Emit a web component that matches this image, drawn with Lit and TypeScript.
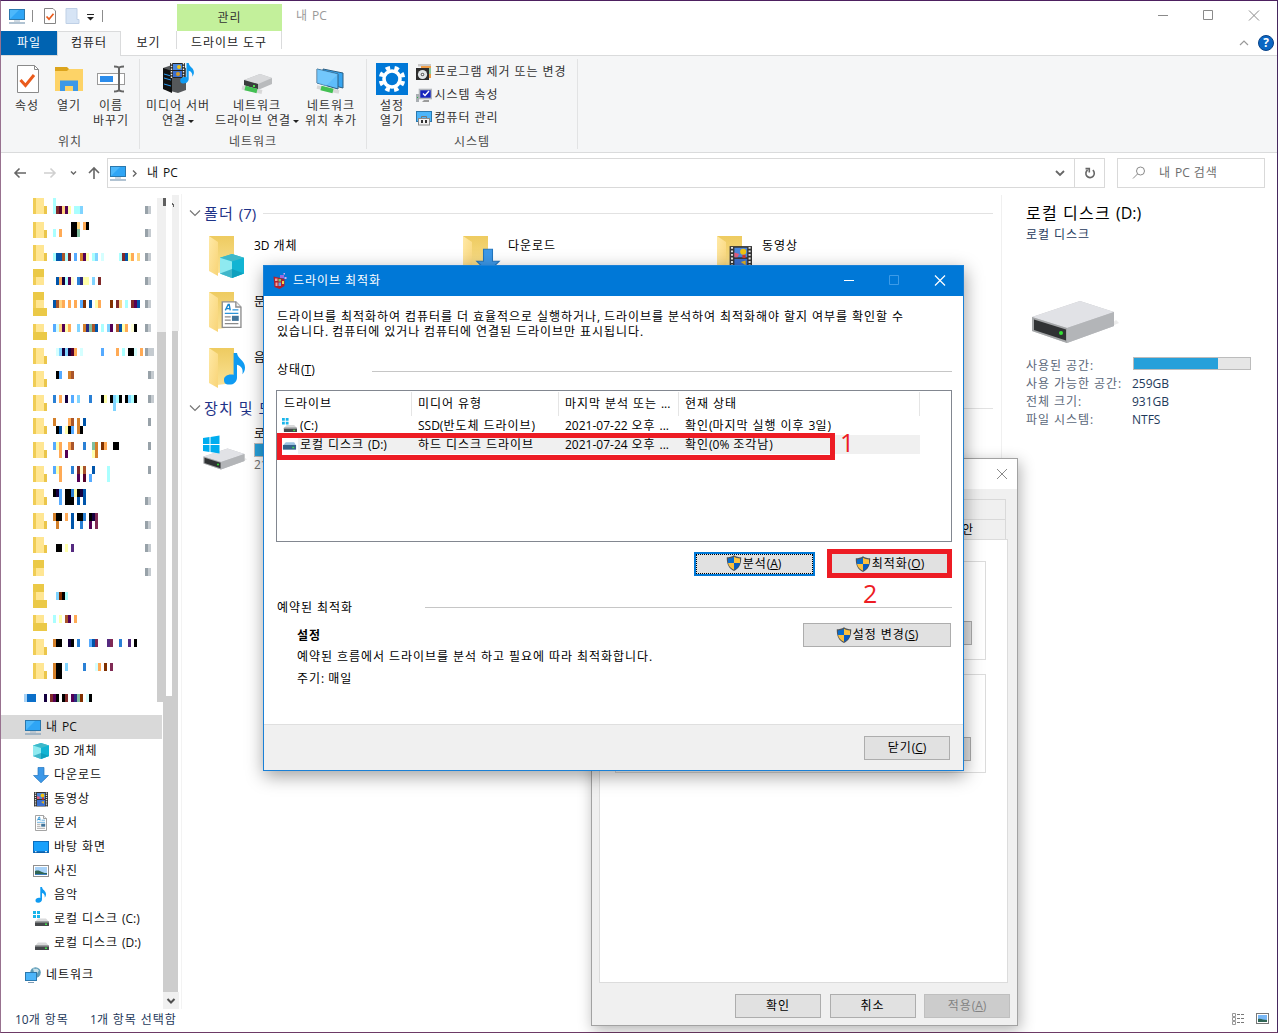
import { LitElement, html, svg, css } from 'lit';
import { customElement, property } from 'lit/decorators.js';
import { classMap } from 'lit/directives/class-map.js';

// wraps the hangul runs, they are set wider than the latin ones
const t = (text: string) =>
  text.split(/([가-힣]+)/).map((part, i) => (i % 2 ? html`<span class="ko">${part}</span>` : part));

const base = css`
  * {
    box-sizing: border-box;
  }
  .ko {
    letter-spacing: 0.08em;
  }
  svg {
    display: block;
    flex: none;
  }
  u {
    text-decoration-thickness: 1px;
    text-underline-offset: 1px;
  }
`;

const drive = (led = true) => svg`
  <path d="M1 9 L4 5.500 H12 L15 9Z" fill="#d9dadb"/>
  <rect x="1" y="8.500" width="14" height="4.500" rx=".6" fill="#45484b"/>
  <path d="M1 9h14" stroke="#a9abad"/>
  ${led ? svg`<rect x="11" y="10.500" width="2" height="1.500" fill="#3ee04a"/>` : ''}`;

const flag = svg`<path d="M0 0h3v3H0zM4 0h3v3H4zM0 4h3v3H0zM4 4h3v3H4z" fill="#19b5ea"/>`;

const monitor = svg`
  <rect x=".5" y="1.500" width="15" height="10" fill="#4db8fb" stroke="#2b78ad"/>
  <path d="M1 11 L10 2h5v9z" fill="#2fa5f5"/>
  <path d="M5 13h6" stroke="#9fb4c6"/><path d="M0 15h16" stroke="#7d9bb5" stroke-width="1.200"/>`;

const film = svg`
  <rect x="1" y="1" width="14" height="14.500" fill="#333"/>
  <rect x="4" y="2" width="8" height="6" fill="#4a86dc"/><rect x="4" y="9" width="8" height="6" fill="#3a6fd0"/>
  <path d="M2.500 1.500v14M13.500 1.500v14" stroke="#e5e5e5" stroke-width="1.300" stroke-dasharray="1.200 1"/>
  <circle cx="9.500" cy="4.500" r="1.900" fill="#f0c413"/><path d="M9 6.500h2v2H9z" fill="#d4372b"/>
  <path d="M4 5l3 1-1 2H4z" fill="#e05b7c"/><path d="M8 11l3-1v3z" fill="#e3b21f"/>`;

const docPage = svg`
  <path d="M2.500 .5h8l3 3v12h-11z" fill="#fff" stroke="#8d8d8d" stroke-width=".8"/>
  <path d="M10.500 .5v3h3" fill="#eee" stroke="#8d8d8d" stroke-width=".8"/>
  <path d="M4.300 5.500l1.700-3.500h.6l.6 3.500M5 4.500h2" stroke="#1787cf" fill="none" stroke-width=".8"/>
  <path d="M8.500 5.200h3.500M4 7.300h8" stroke="#2b93d8" stroke-width=".7"/>
  <path d="M4 9.300h3.500M4 11.300h3.500M4 13.300h8" stroke="#8a8a8a" stroke-width=".7"/>
  <rect x="8.200" y="8.700" width="4" height="3" fill="#42759b"/>`;

const note = svg`<path d="M7.300 0h1.700c.3 3 4 3.600 4 7.200 0 1.600-.6 2.600-1.300 3.400.5-2.400-.5-4.200-2.700-4.700v6.300c0 2-1.500 3.600-3.800 3.600S2.500 14.800 2.500 13.300s1.600-2.600 3.400-2.600c.5 0 1 .1 1.400.2z" fill="#0f9bf2"/>`;

const photo = svg`
  <rect x=".5" y="2.500" width="15" height="11" fill="#fff" stroke="#8f8f8f"/>
  <rect x="2" y="4" width="12" height="8" fill="#a8d2f8"/>
  <path d="M2 8c3-1 5 0 7 1s3 1 5 1v2H2z" fill="#2f6554"/><path d="M2 11h12v1H2z" fill="#3d7fc0"/>`;

const cube = svg`
  <path d="M8 0l8 2.500v10.500L8 16 0 13V2.500z" fill="#22c3d6"/>
  <path d="M8 0l8 2.500L8 5 0 2.500z" fill="#3fb8c9"/>
  <path d="M0 2.500L8 5v11L0 13z" fill="#8feaf0"/><path d="M8 5l8-2.500V13l-8 3z" fill="#12b4d3"/>
  <path d="M0 13l8-3 8 3-8 3z" fill="#0b93b0" opacity=".6"/>`;

const arrowDown = svg`<path d="M5 .5h6v8h4.500L8 15.800.5 8.500H5z" fill="#3c98e8" stroke="#2276bf" stroke-width=".7"/>`;

const icons: Record<string, unknown> = {
  pc: monitor,
  cube,
  down: arrowDown,
  film,
  doc: docPage,
  desktop: svg`<rect x=".5" y="2.500" width="15" height="11" fill="#18a0fb" stroke="#0b6dbd"/><path d="M1 13h14" stroke="#0b5ca6" stroke-width="1.300"/><path d="M2 12.700h1.500M12 12.700h2" stroke="#fff"/>`,
  photo,
  note,
  driveC: svg`${flag}<g transform="translate(1 2)">${drive()}</g>`,
  driveD: svg`<g transform="translate(1 2)">${drive()}</g>`,
  driveSel: svg`<path d="M1 9 L4 5.500 H13 L15 9Z" fill="#9ec3e2"/><rect x="1" y="8.500" width="14" height="5" fill="#34628a"/><rect x="11" y="10.500" width="2" height="1.500" fill="#3ee04a"/>`,
  network: svg`<circle cx="10.500" cy="5.500" r="5.300" fill="#5e9cb8"/><path d="M8 1.500c2 0 3 1 4 0l2 2-2 3-3-1z" fill="#c8e0e8"/><rect x=".5" y="5.500" width="11" height="8" fill="#4bb5fa" stroke="#2b78ad"/><path d="M3 15.500h6" stroke="#7d9bb5"/>`,
  check: svg`<path d="M2.500 .5h8.500l2.500 2.500v12.500h-11z" fill="#fff" stroke="#858585"/><path d="M4.500 8.500l2.500 2.700 4.500-5.500" fill="none" stroke="#ea5b1c" stroke-width="1.700"/>`,
  blank: svg`<path d="M2 .5h11v11h2v4H2z" fill="#d6e4f5" stroke="#bfd0e6"/>`,
  programs: svg`<path d="M2 0h13v2.500H2z" fill="#c8c8c8"/><path d="M5 2h10v12H5z" fill="#ef9d46"/><path d="M9 4h6v6H9z" fill="#8cc79a"/><rect x="0" y="4" width="13" height="12" fill="#2c2c2c"/><circle cx="6.500" cy="10.500" r="4.600" fill="#e2e6e8"/><circle cx="6.500" cy="10.500" r="1.800" fill="#666"/><circle cx="6.500" cy="10.500" r=".8" fill="#fff"/>`,
  system: svg`<rect x="3.500" y="2.500" width="12" height="9" fill="#1524bd" stroke="#b3b7bd" stroke-width="1.600"/><path d="M7 6.500l2 2 4-4.500" stroke="#fff" fill="none" stroke-width="1.400"/><path d="M8 13h5v2H6z" fill="#9b9b9b"/><rect x="0" y="7" width="3" height="8" fill="#a9aeb2"/><rect x="1" y="10" width="1" height="1" fill="#2cb24a"/>`,
  manage: svg`<rect x=".5" y="1.500" width="15" height="10" fill="#4bb5fa" stroke="#2b78ad"/><rect x="2.500" y="8.500" width="11" height="6.500" fill="#f1f1f1" stroke="#8a8a8a"/><path d="M5.500 8V6.500h5V8" fill="none" stroke="#777"/><path d="M5 10h2v3H5zM9 10h2v3H9z" fill="#333"/>`,
  defrag: svg`<path d="M1.500 3.500l7 1.500 4 1v7l-5 3-5-2z" fill="#b3202c"/><path d="M3 5.500h2.500v2.500H3zM3.500 9.500h2V13h-2z" fill="#f2a39b"/><path d="M6.500 6h2.500v2.500H6.500z" fill="#6fd36a"/><path d="M6.500 9.500h2.500V13H6.500z" fill="#62a8f2"/><path d="M10 8h2v3h-2z" fill="#f3d34a"/><path d="M8 2h4v3H8z" fill="#9a6be0"/><path d="M12.500 4h2v2h-2zM11.500 0h1.500v1.500h-1.500z" fill="#d9a6f0"/>`,
  shield: svg`<path d="M8 .2C6 1.600 3.200 2.200.8 2.200.6 9 2.800 13.600 8 16c5.200-2.400 7.400-7 7.200-13.800C12.800 2.200 10 1.600 8 .2z" fill="#4f5459"/><path d="M8 1.700C6.300 2.800 4.200 3.300 2 3.400V8H8z" fill="#0a6ccb"/><path d="M8 1.700c1.700 1.100 3.800 1.600 6 1.700V8H8z" fill="#fdc13c"/><path d="M2.100 8c.5 3.300 2.600 5.400 5.900 6.800V8z" fill="#fdc13c"/><path d="M13.900 8c-.5 3.300-2.600 5.400-5.900 6.800V8z" fill="#0a5cc0"/>`,
};

const icon = (name: string, size = 16) =>
  html`<svg width=${size} height=${size} viewBox="0 0 16 16">${icons[name]}</svg>`;

const bigIcons: Record<string, unknown> = {
  check: svg`<path d="M6.500 2.500h17l4 4v23h-21z" fill="#fff" stroke="#8a8a8a"/><path d="M23.500 2.500v4h4" fill="none" stroke="#8a8a8a"/><path d="M9.500 17l5 5.500 8.500-10.500" fill="none" stroke="#ea5b1c" stroke-width="3"/>`,
  folder: svg`<path d="M2 4h12l2 2h14v4H2z" fill="#dca41c"/><path d="M2 8h12l2-2h14v22H2z" fill="#fdd367"/><path d="M7 28V17.500h18V28h-5v-5h-8v5z" fill="#3c98e8"/>`,
  rename: svg`<rect x="2.500" y="10.500" width="27" height="11" fill="#fff" stroke="#9a9a9a"/><rect x="5" y="13" width="13" height="6" fill="#2b8ceb"/><path d="M19 3.500c3 0 5 .5 5 2v21c0 1-2 2-5 2M29 3.500c-3 0-5 .5-5 2v21c0 1 2 2 5 2" fill="none" stroke="#666" stroke-width="2"/>`,
  media: svg`<path d="M1 5l9-3 14 3v22l-8 3L1 26z" fill="#55585b"/><path d="M1 5l9 3v22l-9-4z" fill="#101213"/><path d="M2 11l7 2M2 15l7 2M2 21l7 2" stroke="#2d9bf0"/><rect x="8" y="0" width="15" height="15" fill="#222"/><rect x="11" y="1" width="9" height="6" fill="#4a86dc"/><rect x="11" y="8" width="9" height="6" fill="#3a6fd0"/><path d="M9.500 0v15M21.500 0v15" stroke="#eee" stroke-width="1.500" stroke-dasharray="1.500 1.200"/><circle cx="17" cy="4" r="2" fill="#f2c614"/><circle cx="16" cy="11" r="2" fill="#d49a2c"/><g transform="translate(15 0) scale(1.300)">${note}</g>`,
  netdrive: svg`<path d="M3 17l16-6 12 4v6l-14 6-14-5z" fill="#b9bbbd"/><path d="M3 17l16-6 12 4-14 6z" fill="#d9dadc"/><path d="M3 17l14 4v6L3 22z" fill="#3a3c3e"/><rect x="12" y="22" width="2" height="2" fill="#4de04d"/><path d="M1 24.500l20 4.500" stroke="#d8d8d8" stroke-width="4"/><path d="M4 25l12 3" stroke="#43c053" stroke-width="4.500"/>`,
  netplace: svg`<path d="M8 6l20 4v15L8 20z" fill="#37a5f0" stroke="#2c5f83"/><path d="M2 6l21 5v15L2 20z" fill="#5ebdfb" stroke="#2c5f83"/><path d="M2 6l21 5-12 12-9-3z" fill="#80cdfd" opacity=".6"/><path d="M2 24l22 5" stroke="#d8d8d8" stroke-width="3.500"/><path d="M6 25l12 3" stroke="#43c053" stroke-width="4.500"/>`,
  gear: svg`<rect width="32" height="32" fill="#0078d7"/><circle cx="16" cy="16" r="8" fill="none" stroke="#fff" stroke-width="3.600"/><circle cx="16" cy="16" r="11.300" fill="none" stroke="#fff" stroke-width="4" stroke-dasharray="4.400 4.475" stroke-dashoffset="-2.200"/>`,
};

const big = (name: string) => html`<svg width="32" height="32" viewBox="0 0 32 32">${bigIcons[name]}</svg>`;

const badges: Record<string, string> = {
  cube: 'translate(12 22) scale(1.500)',
  down: 'translate(14 16.500) scale(1.500)',
  note: 'translate(11 9) scale(2)',
  film: 'translate(12 12.500) scale(1.600)',
  doc: 'translate(10 13) scale(1.700)',
  photo: 'translate(11 15) scale(1.600)',
};

const folderTile = (name: string) => html`
  <svg width="44" height="48" viewBox="0 0 44 48">
    <defs>
      <linearGradient id="fold" x2="1" y2="1"><stop stop-color="#ffe9a6" /><stop offset="1" stop-color="#f8d477" /></linearGradient>
      <linearGradient id="back" y2="1" x2="0"><stop stop-color="#eecb60" /><stop offset="1" stop-color="#fae194" /></linearGradient>
    </defs>
    <path d="M1 4h25v35l-17 2z" fill="url(#back)" />
    <path d="M1 4l9 6v34l-9-5z" fill="url(#fold)" />
    <g transform=${badges[name]}>${icons[name]}</g>
  </svg>
`;

const largeDrive = svg`
  <path d="M74 29l14-6-3-3z" fill="#ececec"/>
  <path d="M1 17L49 1l34 11v14L36 43 1 31z" fill="#c3c5c8"/>
  <path d="M1 17L49 1l34 11-47 16z" fill="#e1e2e6"/>
  <path d="M36 28l47-16v14L36 43z" fill="#b3b5b8"/>
  <path d="M1 17l35 11v15L1 31z" fill="#a4a6a8"/>
  <path d="M3 19.500l32 10v11L3 30z" fill="#303234"/>
  <circle cx="30" cy="33" r="2" fill="#32e332"/>`;

const palette: Record<string, string> = {
  k: '#000000', n: '#15003f', b: '#0055aa', B: '#55aaff', m: '#2a80d5', c: '#aaffff', C: '#80d4ff',
  w: '#d5ffff', o: '#ffaa55', O: '#d4802a', y: '#ffffaa', W: '#ffffd5', Y: '#ffd480', p: '#550055',
  d: '#55002a', r: '#802a2a', R: '#aa552a', s: '#803000', g: '#80c0a0', V: '#2a2a80', v: '#552a80', M: '#802a55',
};

// masked names: [top, one letter for each 3px cell]
const mosaic: [number, string][] = [
  [198, 'c'], [206, 'crdYpy.ccC'], [222, '......kkY.ok'], [229, 'c.o...kkg'],
  [253, 'cbbRcr.B.Opy.cC.w.....crbyo.Y'], [277, '.boncpW.mVyy.C.r'], [300, 'bRYo.o.o.Bs.b.yo...s.rY.c.rpb'],
  [324, 'BwYpyo..C.OVgRb.c.Cp.Rbyo.Wk'], [348, '.wCnCndo.w......B....o.c.kkw.o'], [371, '.kB..OR'],
  [395, 'm.o.n.B.C...m...ky.kCck.kCck'], [403, '....................C'], [418, 'O....oR.O.b'], [426, '.kb.ykB.Ok'],
  [442, 'Byo..oR...m..gO.so..kk'], [450, '..o.p........yO'], [466, 'Byo...m.rWR..b....c'], [474, '..o.....p.d.B.....c'],
  [489, 'knB.kkmyknb'], [497, '..B.kkk.b.b'], [513, 'Okk.o.b.kkm.knM'], [521, '.O....b..m..p.M'], [544, '.kk.y.v'],
  [592, '.Cskc'], [615, 'c.y.Rp.o'], [639, 'Okk..nk.m...BbM...vM..m..v.k'], [663, 'Okk.C.....m...wo.s.M'], [671, 'Okk'],
];
const folders: [number, string][] = [
  [198, 'ab'], [222, 'ab'], [245, 'ab'], [269, 'ta'], [292, 'tat'], [324, 'at'], [348, 'ab'], [371, 'ab'], [395, 'ab'], [418, 'ab'],
  [442, 'ab'], [466, 'ab'], [489, 'ab'], [513, 'ab'], [537, 'ab'], [560, 'ta'], [584, 'tat'], [615, 'at'], [639, 'ab'], [663, 'ab'],
];
const pins: [number, number, number][] = [
  [206, 145, 6], [229, 145, 6], [253, 145, 6], [277, 145, 6], [300, 145, 6], [324, 145, 6], [348, 145, 9], [371, 148, 6],
  [395, 148, 6], [418, 148, 3], [442, 148, 3], [466, 148, 3], [497, 145, 6], [521, 145, 6], [544, 145, 6], [568, 145, 6],
];

@customElement('win-button')
class WinButton extends LitElement {
  @property() label = '';
  @property() key = '';
  @property({ type: Boolean }) shield = false;
  @property({ type: Boolean }) focused = false;
  @property({ type: Boolean }) disabled = false;

  static styles = [
    base,
    css`
      :host {
        display: block;
        height: 24px;
      }
      .button {
        height: 100%;
        display: flex;
        align-items: center;
        justify-content: center;
        background: #e1e1e1;
        border: 1px solid #adadad;
        line-height: 15px;
        padding-bottom: 1px;
        gap: 1px;
      }
      .focused {
        border: 2px solid #0078d7;
        outline: 1px dotted #000;
        outline-offset: -3px;
        padding: 0 2px 2px 0;
      }
      .disabled {
        background: #cccccc;
        border-color: #bfbfbf;
        color: #838383;
      }
    `,
  ];

  render() {
    return html`
      <div class=${classMap({ button: true, focused: this.focused, disabled: this.disabled })}>
        ${this.shield ? icon('shield') : ''}
        <span>${t(this.label)}${this.key ? html`(<u>${this.key}</u>)` : ''}</span>
      </div>
    `;
  }
}

@customElement('explorer-ribbon')
class ExplorerRibbon extends LitElement {
  static styles = [
    base,
    css`
      :host {
        display: block;
      }
      .title {
        display: flex;
        height: 30px;
      }
      .quick {
        width: 176px;
        display: flex;
        align-items: center;
        padding: 0 0 1px 8px;
      }
      .bar {
        width: 1px;
        height: 12px;
        background: #8c8c8c;
      }
      .quick .bar:nth-child(2) {
        margin: 0 9px 0 7px;
      }
      .blank {
        margin-left: 6px;
      }
      .more {
        margin: 2px 8px 0 7px;
      }
      .context {
        width: 105px;
        margin-top: 3px;
        background: #c3f09b;
        text-align: center;
        line-height: 27px;
        color: #333;
      }
      .caption {
        flex: 1;
        padding-left: 14px;
        line-height: 29px;
        color: #999;
      }
      .tabs {
        display: flex;
        height: 25px;
        border-bottom: 1px solid #dadbdc;
        line-height: 24px;
        text-align: center;
        color: #222;
      }
      .tab.file {
        width: 56px;
        height: 24px;
        background: #0063b1;
        color: #fff;
      }
      .tab.active {
        width: 64px;
        height: 25px;
        border: 1px solid #dadbdc;
        border-bottom: 0;
        background: #f5f6f7;
        line-height: 22px;
      }
      .tab.view {
        width: 55px;
      }
      .tab.tools {
        width: 106px;
        height: 18px;
        border: solid #dadbdc;
        border-width: 0 1px;
      }
      .corner {
        flex: 1;
        display: flex;
        align-items: center;
        justify-content: flex-end;
        gap: 9px;
        padding-right: 3px;
      }
      .help {
        width: 16px;
        height: 16px;
        border-radius: 50%;
        border: 1px solid #0a4388;
        background: #0b66c3;
        color: #fff;
        font-weight: 700;
        line-height: 14px;
      }
      .ribbon {
        display: flex;
        height: 97px;
        background: #f5f6f7;
        border-bottom: 1px solid #dadbdc;
        color: #333;
      }
      .group {
        display: flex;
        flex-direction: column;
        align-items: center;
        margin: 3px 0;
        border-right: 1px solid #e2e3e4;
      }
      .items {
        display: flex;
        align-items: flex-start;
        height: 76px;
        padding-top: 4px;
      }
      .place .items,
      .net .items {
        padding-right: 2px;
      }
      .item {
        display: flex;
        flex-direction: column;
        align-items: center;
        text-align: center;
        line-height: 15px;
        white-space: nowrap;
      }
      .item svg {
        margin-bottom: 3px;
      }
      .name {
        line-height: 14px;
        color: #4a4a4a;
      }
      .place { width: 139px; }
      .net { width: 227px; }
      .sys { width: 211px; }
      .w42 { width: 42px; }
      .w76 { width: 76px; }
      .w82 { width: 82px; }
      .w66 { width: 66px; }
      .w50 { width: 49px; }
      .list {
        width: 160px;
        margin-top: -3px;
        display: flex;
        flex-direction: column;
      }
      .entry {
        height: 23px;
        display: flex;
        align-items: center;
        gap: 3px;
        margin-left: -1px;
        line-height: 15px;
      }
      .caret {
        display: inline-block;
        border: 3px solid transparent;
        border-top-color: #222;
        border-bottom: 0;
        vertical-align: 2px;
        margin-left: 2px;
      }
      .address {
        display: flex;
        align-items: center;
        height: 40px;
        margin-bottom: 1px;
        padding: 0 12px 0 12px;
      }
      .path {
        flex: 1;
        height: 30px;
        display: flex;
        align-items: center;
        border: 1px solid #d9d9d9;
        margin-left: 5px;
        padding: 0 0 1px 2px;
        color: #111;
      }
      .path .here {
        flex: 1;
        margin-left: 10px;
      }
      .crumb {
        margin-left: 3px;
      }
      .reload {
        width: 30px;
        height: 28px;
        margin: 1px 0 0 9px;
        display: flex;
        align-items: center;
        justify-content: center;
        border-left: 1px solid #d9d9d9;
      }
      .search {
        width: 148px;
        height: 30px;
        display: flex;
        align-items: center;
        gap: 13px;
        margin-left: 12px;
        padding: 0 0 1px 14px;
        border: 1px solid #d9d9d9;
        color: #6d6d6d;
      }
    `,
  ];

  item(width: string, name: string, first: string, second = '', caret = false) {
    return html`
      <div class="item ${width}">
        ${big(name)}
        <div>${t(first)}</div>
        <div>${t(second)}${caret ? html`<span class="caret"></span>` : ''}</div>
      </div>
    `;
  }

  render() {
    return html`
      <div class="title">
        <div class="quick">
          ${icon('pc')}
          <div class="bar"></div>
          ${icon('check')}
          <div class="blank">${icon('blank')}</div>
          <svg class="more" width="7" height="8" viewBox="0 0 7 8"><path d="M0 1.500h7" stroke="#222" /><path d="M0 4h7L3.500 7.500z" fill="#222" /></svg>
          <div class="bar"></div>
        </div>
        <div class="context">${t('관리')}</div>
        <div class="caption">${t('내 PC')}</div>
        <svg width="120" height="30" viewBox="0 0 120 30" fill="none" stroke="#8a8a8a">
          <path d="M1 14.500h10M46.500 9.500h9v9h-9zM92 9.500l10 10M102 9.500l-10 10" />
        </svg>
      </div>
      <div class="tabs">
        <div class="tab file">${t('파일')}</div>
        <div class="tab active">${t('컴퓨터')}</div>
        <div class="tab view">${t('보기')}</div>
        <div class="tab tools">${t('드라이브 도구')}</div>
        <div class="corner">
          <svg width="10" height="8" viewBox="0 0 10 8"><path d="M1 6l4-4 4 4" fill="none" stroke="#999" stroke-width="1.200" /></svg>
          <div class="help">?</div>
        </div>
      </div>
      <div class="ribbon">
        <div class="group place">
          <div class="items">
            ${this.item('w42', 'check', '속성')} ${this.item('w42', 'folder', '열기')} ${this.item('w42', 'rename', '이름', '바꾸기')}
          </div>
          <div class="name">${t('위치')}</div>
        </div>
        <div class="group net">
          <div class="items">
            ${this.item('w76', 'media', '미디어 서버', '연결', true)} ${this.item('w82', 'netdrive', '네트워크', '드라이브 연결', true)}
            ${this.item('w66', 'netplace', '네트워크', '위치 추가')}
          </div>
          <div class="name">${t('네트워크')}</div>
        </div>
        <div class="group sys">
          <div class="items">
            ${this.item('w50', 'gear', '설정', '열기')}
            <div class="list">
              <div class="entry">${icon('programs')}<span>${t('프로그램 제거 또는 변경')}</span></div>
              <div class="entry">${icon('system')}<span>${t('시스템 속성')}</span></div>
              <div class="entry">${icon('manage')}<span>${t('컴퓨터 관리')}</span></div>
            </div>
          </div>
          <div class="name">${t('시스템')}</div>
        </div>
      </div>
      <div class="address">
        <svg width="89" height="16" viewBox="0 0 89 16" fill="none" stroke="#666" stroke-width="1.600">
          <path d="M13 8H2M6.500 3.500L2 8l4.500 4.500" />
          <path d="M31 8h11M37.500 3.500L42 8l-4.500 4.500" stroke="#d0d0d0" />
          <path d="M58 6.500l2.500 2.500L63 6.500" stroke-width="1.400" />
          <path d="M81 14V3M76 8l5-5 5 5" />
        </svg>
        <div class="path">
          ${icon('pc')}
          <svg class="crumb" width="8" height="10" viewBox="0 0 8 10"><path d="M4 2.500l3 3-3 3" fill="none" stroke="#666" stroke-width="1.400" /></svg>
          <div class="here">${t('내 PC')}</div>
          <svg width="10" height="8" viewBox="0 0 10 8"><path d="M1 2l4 4 4-4" fill="none" stroke="#666" stroke-width="1.800" /></svg>
          <div class="reload">
            <svg width="12" height="12" viewBox="0 0 12 12" fill="none" stroke="#666" stroke-width="1.600">
              <path d="M8.800 3.200A4.200 4.200 0 1 1 3.600 3" /><path d="M1.500 1.600h3.800v4" />
            </svg>
          </div>
        </div>
        <div class="search">
          <svg width="14" height="14" viewBox="0 0 14 14" fill="none" stroke="#8a8a8a"><circle cx="8.500" cy="5" r="4" /><path d="M5.500 8L1 12.500" /></svg>
          <span>${t('내 PC 검색')}</span>
        </div>
      </div>
    `;
  }
}

@customElement('nav-tree')
class NavTree extends LitElement {
  static styles = [
    base,
    css`
      :host {
        display: flex;
        width: 181px;
        border-right: 1px solid #f3f3f3;
      }
      .tree {
        width: 161px;
        margin-right: -161px;
        z-index: 1;
      }
      .row {
        height: 24px;
        display: flex;
        align-items: center;
        gap: 5px;
        padding-left: 32px;
        color: #111;
        white-space: nowrap;
      }
      .root {
        padding-left: 24px;
      }
      .selected {
        background: #d9d9d9;
      }
      .network {
        margin-top: 8px;
      }
      .masked {
        width: 180px;
      }
      .space {
        height: 521px;
      }
    `,
  ];

  render() {
    const rows = [
      ['cube', '3D 개체'], ['down', '다운로드'], ['film', '동영상'], ['doc', '문서'], ['desktop', '바탕 화면'],
      ['photo', '사진'], ['note', '음악'], ['driveC', '로컬 디스크 (C:)'], ['driveD', '로컬 디스크 (D:)'],
    ];
    const cells = (x: number, y: number, line: string) =>
      [...line].map((c, i) => (c === '.' ? '' : svg`<rect x=${x + i * 3} y=${y} width="3" height="8" fill=${palette[c]}/>`));
    return html`
      <div class="tree">
        <div class="space"></div>
        <div class="row root selected">${icon('pc')}<span>${t('내 PC')}</span></div>
        ${rows.map(([name, label]) => html`<div class="row">${icon(name)}<span>${t(label)}</span></div>`)}
        <div class="row root network">${icon('network')}<span>${t('네트워크')}</span></div>
      </div>
      <svg class="masked" width="180" height="815" viewBox="1 194 180 815" shape-rendering="crispEdges">
        ${folders.map(([y, parts]) =>
          [...parts].map((p, i) =>
            p === 't'
              ? svg`<rect x="33" y=${y + i * 8} width=${i ? 14 : 11} height="8" fill="#ebc947"/>`
              : svg`<rect x="33" y=${y + i * 8} width="3" height="8" fill="#f0cd55"/><rect x="36" y=${y + i * 8} width="8" height="8" fill="#ffe693"/>
                ${p === 'b' ? svg`<rect x="44" y=${y + i * 8} width="3" height="8" fill="#ebc64a"/>` : ''}`
          )
        )}
        ${mosaic.map(([y, line]) => cells(53, y, line))}
        ${pins.map(([y, x, w]) => svg`<rect x=${x} y=${y} width=${w} height="8" fill="#c5cbd0"/><rect x=${x} y=${y} width="3" height="8" fill="#98a2a9"/>`)}
        <rect x="24" y="694" width="3" height="8" fill="#a8d2f5" />
        <rect x="27" y="694" width="9" height="8" fill="#0b6fc9" />
        ${cells(44, 694, 'n.rpk.kr.pVgs.wk')}
        <path d="M157 198h9v134h-9zM172 195h7v136h-7z" fill="#f0f0f0" />
        <path d="M157 332h9v364h6V331h6v661h-15V702h-6z" fill="#cdcdcd" />
        <path d="M163 198h3v8h-3zM172 203h1v2h-1zM173 204h1v3h-1z" fill="#606060" />
        <path d="M163 992h16v17h-16z" fill="#f0f0f0" />
        <path d="M167.500 999l3.500 3.500 3.500-3.500" fill="none" stroke="#505050" stroke-width="2" shape-rendering="auto" />
      </svg>
    `;
  }
}

@customElement('file-pane')
class FilePane extends LitElement {
  static styles = [
    base,
    css`
      :host {
        display: block;
        padding: 0 8px 0 7px;
      }
      .head {
        display: flex;
        align-items: center;
        height: 20px;
        font-size: 15px;
        color: #1e3287;
      }
      .head svg {
        margin-right: 3px;
      }
      .head i {
        flex: 1;
        height: 1px;
        background: #e2e2e2;
        margin: 1px 0 0 7px;
      }
      .files {
        display: grid;
        grid-template-columns: repeat(3, 254px);
        grid-auto-rows: 56px;
        padding: 10px 0 0 19px;
        height: 175px;
      }
      .tile {
        display: flex;
        gap: 2px;
        line-height: 16px;
      }
      .tile svg {
        margin-top: -1px;
      }
      .tile span.label {
        margin-top: 5px;
      }
      .drive {
        display: flex;
        padding: 8px 0 0 14px;
      }
      .drive svg {
        margin-top: 4px;
      }
      .info {
        margin-left: 6px;
        line-height: 16px;
      }
      .meter {
        width: 190px;
        height: 14px;
        border: 1px solid #bcbcbc;
        background: linear-gradient(90deg, #26a0da 60%, #e6e6e6 60%);
        margin: 1px 0 0;
      }
      .free {
        color: #6d6d6d;
      }
    `,
  ];

  head(text: string) {
    return html`
      <div class="head">
        <svg width="12" height="8" viewBox="0 0 12 8"><path d="M1 1.500l5 5 5-5" fill="none" stroke="#777" stroke-width="1.200" /></svg>
        <span>${t(text)}</span><i></i>
      </div>
    `;
  }

  render() {
    const files = [
      ['cube', '3D 개체'], ['down', '다운로드'], ['film', '동영상'], ['doc', '문서'], ['photo', '바탕 화면'], ['photo', '사진'], ['note', '음악'],
    ];
    return html`
      ${this.head('폴더 (7)')}
      <div class="files">
        ${files.map(([name, label]) => html`<div class="tile">${folderTile(name)}<span class="label">${t(label)}</span></div>`)}
      </div>
      ${this.head('장치 및 드라이브 (2)')}
      <div class="drive">
        <svg width="45" height="48" viewBox="0 -36 90 96">${largeDrive}<path d="M0-20l13-2v14H0zM15-22l18-3v17H15zM0-6h13v14L0 6zM15-6h18v17l-18-3z" fill="#00adef" /></svg>
        <div class="info">
          <div>${t('로컬 디스크 (C:)')}</div>
          <div class="meter"></div>
          <div class="free">${t('217GB 중 95.4GB 사용 가능')}</div>
        </div>
      </div>
    `;
  }
}

@customElement('details-pane')
class DetailsPane extends LitElement {
  static styles = [
    base,
    css`
      :host {
        display: block;
        border-left: 1px solid #f0f0f0;
        padding: 8px 0 0 24px;
        color: #1e395b;
      }
      h1 {
        margin: 0;
        font-size: 16px;
        font-weight: 400;
        line-height: 20px;
        color: #000;
      }
      .kind {
        line-height: 24px;
      }
      .picture {
        margin: 53px 0 13px 5px;
      }
      dl {
        display: grid;
        grid-template-columns: 106px 119px;
        grid-auto-rows: 18px;
        line-height: 18px;
        margin: 0;
        white-space: nowrap;
      }
      dt {
        color: #5a6779;
      }
      dd {
        margin: 0;
      }
      .usage {
        height: 13px;
        margin: 0 0 0 1px;
        border: 1px solid #bcbcbc;
        background: #e6e6e6;
      }
      .used {
        height: 100%;
        background: #26a0da;
      }
    `,
  ];

  render() {
    const total = 931;
    const free = 259;
    return html`
      <h1>${t('로컬 디스크 (D:)')}</h1>
      <div class="kind">${t('로컬 디스크')}</div>
      <svg class="picture" width="90" height="44" viewBox="0 0 90 44">${largeDrive}</svg>
      <dl>
        <dt>${t('사용된 공간:')}</dt>
        <dd class="usage"><div class="used" style="width:${((total - free) / total) * 100}%"></div></dd>
        <dt>${t('사용 가능한 공간:')}</dt>
        <dd>${free}GB</dd>
        <dt>${t('전체 크기:')}</dt>
        <dd>${total}GB</dd>
        <dt>${t('파일 시스템:')}</dt>
        <dd>NTFS</dd>
      </dl>
    `;
  }
}

@customElement('properties-dialog')
class PropertiesDialog extends LitElement {
  static styles = [
    base,
    css`
      :host {
        display: flex;
        flex-direction: column;
        background: #f0f0f0;
        border: 1px solid #a2a2a2;
        box-shadow: 2px 4px 14px rgba(0, 0, 0, 0.3);
      }
      .title {
        height: 30px;
        display: flex;
        align-items: center;
        justify-content: flex-end;
        background: #fff;
        padding: 0 9px 1px 0;
      }
      .strip {
        height: 20px;
        margin: 0 11px 0 9px;
        border: 1px solid #d9d9d9;
        border-bottom: 0;
      }
      .strip.first {
        margin-top: 10px;
      }
      .strip.second {
        text-align: right;
        padding-right: 31px;
        line-height: 20px;
      }
      .page {
        flex: 1;
        display: flex;
        flex-direction: column;
        gap: 14px;
        margin: 0 9px 0 7px;
        padding: 21px 21px 0 15px;
        background: #fff;
        border: 1px solid #dcdcdc;
      }
      .box {
        height: 99px;
        display: flex;
        align-items: flex-end;
        justify-content: flex-end;
        border: 1px solid #dcdcdc;
        padding: 0 13px 14px;
      }
      .box win-button {
        width: 120px;
      }
      .box + .box {
        padding-bottom: 11px;
        padding-right: 14px;
      }
      .foot {
        display: flex;
        justify-content: flex-end;
        gap: 8.500px;
        padding: 11px 7px 7px;
      }
      .foot win-button {
        width: 86px;
      }
    `,
  ];

  render() {
    return html`
      <div class="title">
        <svg width="12" height="12" viewBox="0 0 12 12"><path d="M1 1l10 10M11 1L1 11" stroke="#8a8a8a" /></svg>
      </div>
      <div class="strip first"></div>
      <div class="strip second">${t('보안')}</div>
      <div class="page">
        <div class="box"><win-button></win-button></div>
        <div class="box"><win-button></win-button></div>
      </div>
      <div class="foot">
        <win-button label="확인"></win-button>
        <win-button label="취소"></win-button>
        <win-button label="적용" key="A" disabled></win-button>
      </div>
    `;
  }
}

@customElement('optimize-dialog')
class OptimizeDialog extends LitElement {
  static styles = [
    base,
    css`
      :host {
        display: flex;
        flex-direction: column;
        background: #fff;
        border: 1px solid #1a80d6;
        box-shadow: 1px 5px 17px rgba(0, 0, 0, 0.38);
        color: #000;
      }
      .title {
        height: 30px;
        display: flex;
        align-items: center;
        gap: 5px;
        padding-left: 8px;
        background: #0078d7;
        color: #fff;
      }
      .title span.text {
        flex: 1;
      }
      .main {
        flex: 1;
        padding: 13px 11px 0 12px;
      }
      .intro {
        margin: 0;
        height: 30px;
        padding-left: 1px;
        line-height: 15px;
        white-space: nowrap;
      }
      .section {
        display: flex;
        align-items: center;
        height: 16px;
      }
      .section i {
        flex: 1;
        height: 1px;
        background: #c6c6c6;
      }
      .section span.text {
        padding-left: 1px;
      }
      .status {
        margin-top: 23px;
      }
      .status span.text {
        width: 96px;
      }
      .status i {
        margin-top: 2px;
      }
      .list {
        height: 152px;
        width: 676px;
        margin-top: 12px;
        border: 1px solid #828790;
        padding-top: 1px;
      }
      .line {
        display: grid;
        grid-template-columns: 135px 147px 120px 241px;
        height: 19px;
        line-height: 19px;
      }
      .line > div {
        padding-left: 6px;
        white-space: nowrap;
      }
      .header {
        height: 24px;
        line-height: 23px;
      }
      .header > div {
        border-right: 1px solid #e5e5e5;
      }
      .header > div:first-child {
        padding-left: 7px;
      }
      .body .cell:first-child {
        display: flex;
        align-items: center;
        padding-left: 5px;
        gap: 3px;
      }
      .selected {
        background: linear-gradient(90deg, #fff 21px, #f0f0f0 21px);
        width: 643px;
      }
      .actions {
        display: flex;
        justify-content: flex-end;
        gap: 13px;
        padding: 10px 1px 0 0;
      }
      .analyze {
        width: 121px;
      }
      .optimize {
        width: 123px;
      }
      .schedule {
        margin-top: 24px;
      }
      .schedule span.text {
        width: 149px;
      }
      .schedule i {
        margin-bottom: 2px;
      }
      .plan {
        display: flex;
        justify-content: space-between;
        padding: 8px 1px 0 21px;
        line-height: 21.500px;
      }
      .plan b {
        display: block;
        margin-top: 0.5px;
      }
      .plan .change {
        width: 148px;
        margin-top: -1px;
      }
      .foot {
        height: 46px;
        display: flex;
        justify-content: flex-end;
        padding: 11px 13px 0 0;
        background: #f0f0f0;
        border-top: 1px solid #dfdfdf;
      }
      .foot win-button {
        width: 86px;
      }
      .mark {
        position: absolute;
        border: 5px solid #ed1c24;
      }
      .mark.row {
        left: 13px;
        top: 167px;
        width: 558px;
        height: 27px;
      }
      .mark.button {
        left: 563px;
        top: 283px;
        width: 125px;
        height: 29px;
      }
      .step {
        position: absolute;
        color: #ed1c24;
        font-size: 25px;
        line-height: 28px;
      }
      .step.one {
        left: 576px;
        top: 162px;
      }
      .step.two {
        left: 599px;
        top: 313px;
      }
    `,
  ];

  render() {
    const drives = [
      ['driveC', '(C:)', 'SSD(반도체 드라이브)', '2021-07-22 오후 ...', '확인(마지막 실행 이후 3일)'],
      ['driveSel', '로컬 디스크 (D:)', '하드 디스크 드라이브', '2021-07-24 오후 ...', '확인(0% 조각남)'],
    ];
    return html`
      <div class="title">
        ${icon('defrag')}<span class="text">${t('드라이브 최적화')}</span>
        <svg width="120" height="30" viewBox="0 0 120 30" fill="none" stroke="#fff">
          <path d="M1 14.500h10M92 9.500l10 10M102 9.500l-10 10" stroke-width="1.200" /><path d="M46.500 9.500h9v9h-9z" stroke="#3c9be8" />
        </svg>
      </div>
      <div class="main">
        <p class="intro">
          ${t('드라이브를 최적화하여 컴퓨터를 더 효율적으로 실행하거나, 드라이브를 분석하여 최적화해야 할지 여부를 확인할 수')}<br />
          ${t('있습니다. 컴퓨터에 있거나 컴퓨터에 연결된 드라이브만 표시됩니다.')}
        </p>
        <div class="section status"><span class="text">${t('상태')}(<u>T</u>)</span><i></i></div>
        <div class="list">
          <div class="line header">
            ${['드라이브', '미디어 유형', '마지막 분석 또는 ...', '현재 상태'].map((c) => html`<div>${t(c)}</div>`)}
          </div>
          ${drives.map(
            ([name, ...cols], row) => html`
              <div class=${classMap({ line: true, body: true, selected: row === 1 })}>
                ${cols.map((c, i) => html`<div class="cell">${i ? '' : icon(name, 15)}<span>${t(c)}</span></div>`)}
              </div>
            `
          )}
        </div>
        <div class="actions">
          <win-button class="analyze" label="분석" key="A" shield focused></win-button>
          <win-button class="optimize" label="최적화" key="O" shield></win-button>
        </div>
        <div class="section schedule"><span class="text">${t('예약된 최적화')}</span><i></i></div>
        <div class="plan">
          <div>
            <b>${t('설정')}</b>
            <div>${t('예약된 흐름에서 드라이브를 분석 하고 필요에 따라 최적화합니다.')}</div>
            <div>${t('주기: 매일')}</div>
          </div>
          <win-button class="change" label="설정 변경" key="S" shield></win-button>
        </div>
      </div>
      <div class="foot"><win-button label="닫기" key="C"></win-button></div>
      <div class="mark row"></div>
      <div class="mark button"></div>
      <div class="step one">1</div>
      <div class="step two">2</div>
    `;
  }
}

@customElement('app-root')
class AppRoot extends LitElement {
  static styles = [
    base,
    css`
      :host {
        display: block;
        position: relative;
        width: 1278px;
        height: 1033px;
        overflow: hidden;
        background: #fff;
        font: 12px/16px 'Open Sans', 'Noto Sans CJK KR', sans-serif;
        word-spacing: 0.07em;
        color: #000;
      }
      .window {
        height: 100%;
        display: flex;
        flex-direction: column;
        border: 1px solid #6d3a66;
        border-top-color: #4d2060;
        border-right-color: #46285f;
        border-left-color: #98718f;
      }
      .content {
        flex: 1;
        display: grid;
        grid-template-columns: 181px 819px 1fr;
        min-height: 0;
      }
      file-pane,
      details-pane {
        margin-top: 1px;
      }
      file-pane {
        padding-top: 8px;
      }
      .statusbar {
        height: 24px;
        display: flex;
        align-items: center;
        padding: 0 7px 0 14px;
        color: #1e395b;
      }
      .statusbar .count {
        width: 75px;
      }
      .statusbar .picked {
        flex: 1;
      }
      .statusbar svg {
        margin-bottom: 2px;
      }
      properties-dialog {
        position: absolute;
        left: 591px;
        top: 458px;
        width: 427px;
        height: 568px;
      }
      optimize-dialog {
        position: absolute;
        left: 263px;
        top: 265px;
        width: 701px;
        height: 506px;
      }
    `,
  ];

  render() {
    return html`
      <div class="window">
        <explorer-ribbon></explorer-ribbon>
        <div class="content">
          <nav-tree></nav-tree>
          <file-pane></file-pane>
          <details-pane></details-pane>
        </div>
        <div class="statusbar">
          <div class="count">${t('10개 항목')}</div>
          <div class="picked">${t('1개 항목 선택함')}</div>
          <svg width="38" height="14" viewBox="0 0 38 14">
            <path d="M.5 1.500h3v3h-3zM.5 5.500h3v3h-3zM.5 9.500h3v3h-3z" fill="#fff" stroke="#999" />
            <path d="M5 3h3m1 0h3M5 7h3m1 0h3M5 11h3m1 0h3" transform="translate(0 -.5)" stroke="#777" />
            <rect x="24.500" y="1.500" width="12" height="10" fill="#fff" stroke="#777" />
            <rect x="26" y="3" width="9" height="7" fill="#78b7f5" /><path d="M26 7c3-1 5 1 9 1v2h-9z" fill="#2f6554" />
          </svg>
        </div>
      </div>
      <properties-dialog></properties-dialog>
      <optimize-dialog></optimize-dialog>
    `;
  }
}
